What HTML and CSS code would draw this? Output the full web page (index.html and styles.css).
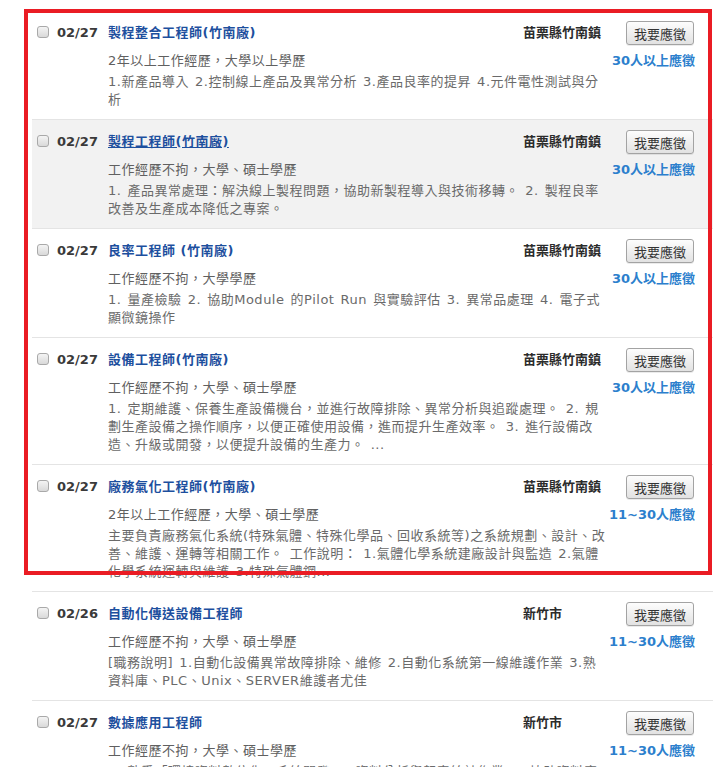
FILE: index.html
```html
<!DOCTYPE html>
<html lang="zh-Hant">
<head>
<meta charset="utf-8">
<title>職缺列表</title>
<link rel="stylesheet" href="styles.css">
</head>
<body>
<div class="job-list">
  <div class="job">
    <input type="checkbox" class="cb">
    <span class="date">02/27</span>
    <a class="title" href="#">製程整合工程師(竹南廠)</a>
    <span class="loc">苗栗縣竹南鎮</span>
    <button class="apply">我要應徵</button>
    <div class="sub">2年以上工作經歷，大學以上學歷</div>
    <span class="count">30人以上應徵</span>
    <div class="desc">1.新產品導入 2.控制線上產品及異常分析 3.產品良率的提昇 4.元件電性測試與分析</div>
  </div>
  <div class="job hover">
    <input type="checkbox" class="cb">
    <span class="date">02/27</span>
    <a class="title" href="#">製程工程師(竹南廠)</a>
    <span class="loc">苗栗縣竹南鎮</span>
    <button class="apply">我要應徵</button>
    <div class="sub">工作經歷不拘，大學、碩士學歷</div>
    <span class="count">30人以上應徵</span>
    <div class="desc">1. 產品異常處理：解決線上製程問題，協助新製程導入與技術移轉。 2. 製程良率改善及生產成本降低之專案。</div>
  </div>
  <div class="job">
    <input type="checkbox" class="cb">
    <span class="date">02/27</span>
    <a class="title" href="#">良率工程師 (竹南廠)</a>
    <span class="loc">苗栗縣竹南鎮</span>
    <button class="apply">我要應徵</button>
    <div class="sub">工作經歷不拘，大學學歷</div>
    <span class="count">30人以上應徵</span>
    <div class="desc">1. 量產檢驗 2. 協助Module 的Pilot Run 與實驗評估 3. 異常品處理 4. 電子式顯微鏡操作</div>
  </div>
  <div class="job">
    <input type="checkbox" class="cb">
    <span class="date">02/27</span>
    <a class="title" href="#">設備工程師(竹南廠)</a>
    <span class="loc">苗栗縣竹南鎮</span>
    <button class="apply">我要應徵</button>
    <div class="sub">工作經歷不拘，大學、碩士學歷</div>
    <span class="count">30人以上應徵</span>
    <div class="desc">1. 定期維護、保養生產設備機台，並進行故障排除、異常分析與追蹤處理。 2. 規劃生產設備之操作順序，以便正確使用設備，進而提升生產效率。 3. 進行設備改造、升級或開發，以便提升設備的生產力。 ...</div>
  </div>
  <div class="job">
    <input type="checkbox" class="cb">
    <span class="date">02/27</span>
    <a class="title" href="#">廠務氣化工程師(竹南廠)</a>
    <span class="loc">苗栗縣竹南鎮</span>
    <button class="apply">我要應徵</button>
    <div class="sub">2年以上工作經歷，大學、碩士學歷</div>
    <span class="count">11~30人應徵</span>
    <div class="desc">主要負責廠務氣化系統(特殊氣體、特殊化學品、回收系統等)之系統規劃、設計、改善、維護、運轉等相關工作。 工作說明： 1.氣體化學系統建廠設計與監造 2.氣體化學系統運轉與維護 3.特殊氣體鋼...</div>
  </div>
  <div class="job">
    <input type="checkbox" class="cb">
    <span class="date">02/26</span>
    <a class="title" href="#">自動化傳送設備工程師</a>
    <span class="loc">新竹市</span>
    <button class="apply">我要應徵</button>
    <div class="sub">工作經歷不拘，大學、碩士學歷</div>
    <span class="count">11~30人應徵</span>
    <div class="desc">[職務說明] 1.自動化設備異常故障排除、維修 2.自動化系統第一線維護作業 3.熟資料庫、PLC、Unix、SERVER維護者尤佳</div>
  </div>
  <div class="job">
    <input type="checkbox" class="cb">
    <span class="date">02/27</span>
    <a class="title" href="#">數據應用工程師</a>
    <span class="loc">新竹市</span>
    <button class="apply">我要應徵</button>
    <div class="sub">工作經歷不拘，大學、碩士學歷</div>
    <span class="count">11~30人應徵</span>
    <div class="desc">1. 熟悉「環境資料數位化」系統開發 2. 資料分析與報表統計作業 3. 協助資料庫建置與維護</div>
  </div>
</div>
<div class="highlight"></div>
</body>
</html>
```
FILE: styles.css
```css
html, body {
  margin: 0;
  padding: 0;
  background: #fff;
}
body {
  font-family: "DejaVu Sans", "Noto Sans CJK TC", sans-serif;
  font-size: 13px;
  color: #333;
}
.job-list {
  margin: 11px 0 0 32px;
  width: 681px;
}
.job {
  display: grid;
  grid-template-columns: 20px 51px 415px 83px 88px;
  grid-template-areas:
    "cb date title loc btn"
    ".  .    sub   sub count"
    ".  .    desc  desc .";
  grid-template-rows: 24px auto auto;
  padding: 10px 19px 10px 5px;
  border-bottom: 1px solid #e4e4e4;
  align-items: center;
}
.job.hover {
  background: #f2f2f2;
}
.cb {
  grid-area: cb;
  appearance: none;
  -webkit-appearance: none;
  margin: 0;
  width: 12px;
  height: 12px;
  border: 1px solid #a9a9a9;
  border-radius: 3px;
  background: linear-gradient(#f4f4f4, #d9d9d9);
  justify-self: start;
  position: relative;
  top: -1px;
}
.date {
  grid-area: date;
  font-weight: bold;
  color: #3a3a3a;
  line-height: 20px;
}
.title {
  grid-area: title;
  font-weight: bold;
  color: #1d4f9e;
  text-decoration: none;
  letter-spacing: 0.5px;
  line-height: 20px;
  justify-self: start;
}
.job.hover .title {
  text-decoration: underline;
}
.loc {
  grid-area: loc;
  font-weight: bold;
  color: #2b2b2b;
  line-height: 20px;
}
.apply {
  grid-area: btn;
  justify-self: end;
  width: 68px;
  height: 24px;
  margin: 0;
  padding: 0;
  font-family: "DejaVu Sans", "Noto Sans CJK TC", sans-serif;
  font-size: 13px;
  color: #333;
  border: 1px solid #a3a3a3;
  border-radius: 3px;
  background: linear-gradient(#fdfdfd, #e2e2e2);
  box-shadow: 0 1px 0 rgba(0,0,0,0.08);
}
.sub {
  grid-area: sub;
  margin-top: 6px;
  line-height: 20px;
  color: #606060;
  letter-spacing: 0.5px;
}
.count {
  grid-area: count;
  margin-top: 6px;
  justify-self: end;
  margin-right: -1px;
  line-height: 20px;
  font-weight: bold;
  color: #2c7fcd;
  white-space: nowrap;
}
.desc {
  grid-area: desc;
  margin-top: 2px;
  line-height: 18px;
  color: #6a6a6a;
  letter-spacing: 0.5px;
  word-spacing: 1.5px;
}
.highlight {
  position: absolute;
  left: 24px;
  top: 9px;
  width: 688px;
  height: 566px;
  box-sizing: border-box;
  border: 4px solid #ea1c24;
  pointer-events: none;
}
```
